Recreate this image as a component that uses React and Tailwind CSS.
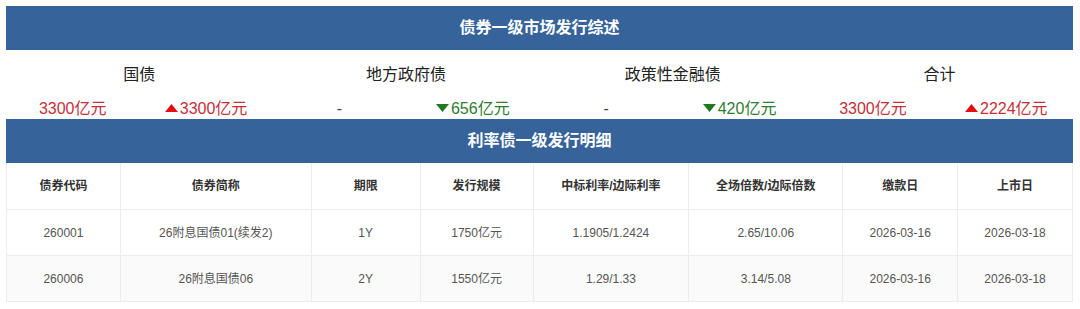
import React from "react";

const summary = [
  { label: "国债", left: { text: "3300亿元", tone: "red" }, right: { text: "3300亿元", tone: "red", arrow: "up" } },
  { label: "地方政府债", left: { text: "-", tone: "dash" }, right: { text: "656亿元", tone: "green", arrow: "down" } },
  { label: "政策性金融债", left: { text: "-", tone: "dash" }, right: { text: "420亿元", tone: "green", arrow: "down" } },
  { label: "合计", left: { text: "3300亿元", tone: "red" }, right: { text: "2224亿元", tone: "red", arrow: "up" } },
];

const cols = [
  { title: "债券代码", w: "w-[114px]" },
  { title: "债券简称", w: "w-[191px]" },
  { title: "期限", w: "w-[109px]" },
  { title: "发行规模", w: "w-[113px]" },
  { title: "中标利率/边际利率", w: "w-[156px]" },
  { title: "全场倍数/边际倍数", w: "w-[154px]" },
  { title: "缴款日", w: "w-[115px]" },
  { title: "上市日", w: "w-[115px]" },
];

const rows = [
  ["260001", "26附息国债01(续发2)", "1Y", "1750亿元", "1.1905/1.2424", "2.65/10.06", "2026-03-16", "2026-03-18"],
  ["260006", "26附息国债06", "2Y", "1550亿元", "1.29/1.33", "3.14/5.08", "2026-03-16", "2026-03-18"],
];

const Value = ({ v }) => {
  const color = v.tone === "red" ? "text-[#c4303a]" : v.tone === "green" ? "text-[#2f7d32]" : "text-[#444]";
  return (
    <div className={`flex-1 flex items-center justify-center ${color}`}>
      {v.arrow === "up" && (
        <svg width="13" height="8" viewBox="0 0 13 8" className="mr-[2px] mt-[-2px]">
          <polygon points="6.5,0 13,8 0,8" fill="#e01010" />
        </svg>
      )}
      {v.arrow === "down" && (
        <svg width="13" height="8" viewBox="0 0 13 8" className="mr-[2px] mt-[-1px]">
          <polygon points="0,0 13,0 6.5,8" fill="#1f7a1f" />
        </svg>
      )}
      <span>{v.text}</span>
    </div>
  );
};

export default function App() {
  return (
    <div
      className="w-[1080px] h-[309px] bg-white pt-[6px] pl-[6px]"
      style={{ fontFamily: '"Liberation Sans", Arial, "Noto Sans CJK SC", sans-serif' }}
    >
      <div className="w-[1067px]">
        <div className="h-[44px] bg-[#36639a] flex items-center justify-center text-white text-[16px] font-bold">
          债券一级市场发行综述
        </div>

        <div className="flex h-[48px]">
          {summary.map((s) => (
            <div key={s.label} className="flex-1 flex items-center justify-center text-[16px] text-[#222] pt-[2px]">
              {s.label}
            </div>
          ))}
        </div>
        <div className="flex h-[21px] text-[16px] leading-[21px]">
          {summary.map((s) => (
            <div key={s.label} className="flex-1 flex">
              <Value v={s.left} />
              <Value v={s.right} />
            </div>
          ))}
        </div>

        <div className="h-[44px] bg-[#36639a] flex items-center justify-center text-white text-[16px] font-bold">
          利率债一级发行明细
        </div>

        <div className="border-l border-[#ececec] text-[12px]">
          <div className="flex h-[47px] bg-white border-b border-[#ececec]">
            {cols.map((c) => (
              <div key={c.title} className={`${c.w} flex items-center justify-center font-bold text-[#333] border-r border-[#ececec]`}>
                {c.title}
              </div>
            ))}
          </div>
          {rows.map((r, i) => (
            <div key={i} className={`flex h-[46px] border-b border-[#ececec] ${i === 1 ? "bg-[#fafafa]" : "bg-white"}`}>
              {r.map((cell, j) => (
                <div key={j} className={`${cols[j].w} flex items-center justify-center text-[#555] border-r border-[#ececec]`}>
                  {cell}
                </div>
              ))}
            </div>
          ))}
        </div>
      </div>
    </div>
  );
}
